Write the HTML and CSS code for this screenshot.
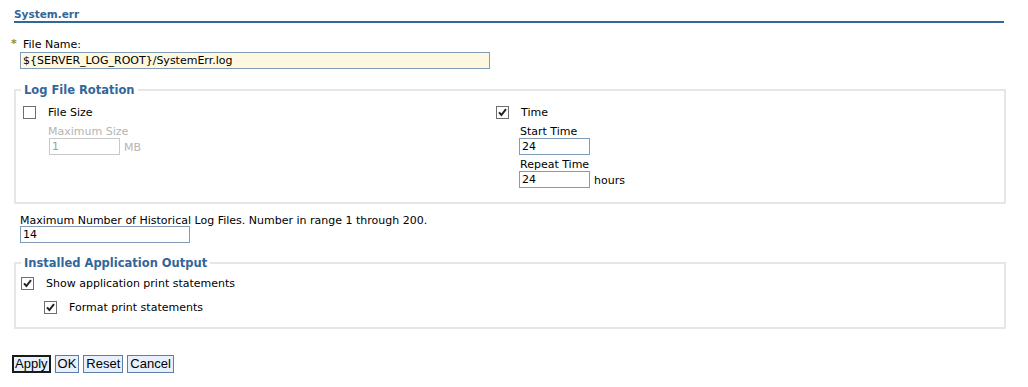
FILE: index.html
```html
<!DOCTYPE html>
<html lang="en">
<head>
    <meta charset="UTF-8">
    <title>System.err</title>
    <link rel="stylesheet" href="styles.css">
</head>
<body>
    <div class="page">
        <h2 class="section-title">System.err</h2>

        <div class="field name-field">
            <label class="field-label"><span class="required">*</span>File Name:</label>
            <input type="text" class="text-input wide required-input" value="${SERVER_LOG_ROOT}/SystemErr.log">
        </div>

        <fieldset class="group rotation">
            <legend>Log File Rotation</legend>
            <div class="rotation-cols">
                <div class="rotation-col">
                    <div class="check-row">
                        <span class="checkbox"></span>
                        <span class="check-label">File Size</span>
                    </div>
                    <div class="sub-field disabled">
                        <label class="field-label">Maximum Size</label>
                        <div class="input-row">
                            <input type="text" class="text-input short" value="1" disabled>
                            <span class="unit">MB</span>
                        </div>
                    </div>
                </div>
                <div class="rotation-col time-col">
                    <div class="check-row">
                        <span class="checkbox checked"><svg viewBox="0 0 11 11" width="11" height="11"><path d="M2 5.3 L4.4 8 L9 2.2" fill="none" stroke="#222" stroke-width="2"/></svg></span>
                        <span class="check-label">Time</span>
                    </div>
                    <div class="sub-field">
                        <label class="field-label">Start Time</label>
                        <input type="text" class="text-input short" value="24">
                    </div>
                    <div class="sub-field">
                        <label class="field-label">Repeat Time</label>
                        <div class="input-row">
                            <input type="text" class="text-input short" value="24">
                            <span class="unit">hours</span>
                        </div>
                    </div>
                </div>
            </div>
        </fieldset>

        <div class="field history-field">
            <label class="field-label">Maximum Number of Historical Log Files. Number in range 1 through 200.</label>
            <input type="text" class="text-input medium" value="14">
        </div>

        <fieldset class="group output">
            <legend>Installed Application Output</legend>
            <div class="check-row">
                <span class="checkbox checked"><svg viewBox="0 0 11 11" width="11" height="11"><path d="M2 5.3 L4.4 8 L9 2.2" fill="none" stroke="#222" stroke-width="2"/></svg></span>
                <span class="check-label">Show application print statements</span>
            </div>
            <div class="check-row nested">
                <span class="checkbox checked"><svg viewBox="0 0 11 11" width="11" height="11"><path d="M2 5.3 L4.4 8 L9 2.2" fill="none" stroke="#222" stroke-width="2"/></svg></span>
                <span class="check-label">Format print statements</span>
            </div>
        </fieldset>

        <div class="buttons">
            <button type="button" class="btn default">Apply</button>
            <button type="button" class="btn">OK</button>
            <button type="button" class="btn">Reset</button>
            <button type="button" class="btn">Cancel</button>
        </div>
    </div>
</body>
</html>
```

FILE: styles.css
```css
body {
    margin: 0;
    padding: 0;
    background-color: #fff;
    font-family: "DejaVu Sans", Verdana, sans-serif;
    font-size: 11px;
    color: #000;
}
.page {
    width: 992px;
    padding: 8px 0 0 14px;
}
.section-title {
    margin: 0;
    width: 990px;
    padding: 0;
    line-height: 13px;
    font-size: 10.5px;
    font-weight: bold;
    color: #336699;
    border-bottom: 2px solid #336699;
}
.field-label {
    display: block;
    line-height: 13px;
}
.name-field {
    margin-top: 15px;
    position: relative;
    padding-left: 6px;
}
.name-field .field-label {
    margin-left: 3px;
}
.required {
    position: absolute;
    left: -3px;
    top: -1px;
    color: #a08a00;
    font-weight: bold;
}
.text-input {
    display: block;
    box-sizing: border-box;
    height: 17px;
    margin: 0;
    padding: 1px 2px;
    border: 1px solid #7f9db9;
    font-family: "DejaVu Sans", Verdana, sans-serif;
    font-size: 11px;
    color: #000;
    background: #fff;
}
.name-field .text-input {
    margin-top: 1px;
}
.wide {
    width: 470px;
}
.required-input {
    background-color: #fff8e1;
}
.short {
    width: 71px;
}
.medium {
    width: 170px;
}
.group {
    margin: 14px 0 0 0;
    width: 992px;
    box-sizing: border-box;
    border: 2px solid #e6e6e6;
    padding: 0 8px 0 7px;
}
.group legend {
    padding: 0 3px;
    margin-left: -2px;
    font-size: 11.5px;
    font-weight: bold;
    color: #336699;
}
.rotation {
    height: 121px;
}
.rotation-cols {
    display: flex;
    padding-top: 4px;
}
.rotation-col {
    width: 473px;
}
.check-row {
    display: flex;
    align-items: center;
    height: 16px;
    margin-top: 3px;
}
.checkbox {
    display: flex;
    align-items: center;
    justify-content: center;
    box-sizing: border-box;
    width: 13px;
    height: 13px;
    border: 1px solid #6e6e6e;
    background: #fff;
    margin-right: 12px;
}
.sub-field {
    margin-left: 24px;
    margin-top: 5px;
}
.time-col .sub-field + .sub-field {
    margin-top: 3px;
}
.input-row {
    display: flex;
    align-items: center;
}
.unit {
    margin-left: 4px;
    margin-top: 1px;
}
.disabled {
    color: #b4b4b4;
}
.disabled .text-input {
    border-color: #c8c8c8;
    color: #a0a0a0;
    background: #fff;
    margin-left: 2px;
}
.time-col .text-input {
    margin-left: -1px;
}
.disabled .field-label {
    margin-left: 1px;
}
.history-field {
    margin-top: 10px;
    padding-left: 6px;
}
.history-field .text-input {
    margin-top: -1px;
}
.output {
    margin-top: 13px;
    height: 73px;
    padding-top: 3px;
    padding-left: 5px;
}
.output legend {
    margin-left: 0;
}
.output .check-row {
    margin-top: 2px;
}
.check-row.nested {
    margin-left: 23px;
    margin-top: 8px;
}
.buttons {
    display: flex;
    gap: 4px;
    margin-top: 26px;
    margin-left: -2px;
}
.btn {
    font-family: "Liberation Sans", Arial, sans-serif;
    font-size: 13px;
    height: 18px;
    line-height: 14px;
    padding: 0 2px;
    border: 1px solid #5a7ea8;
    background-color: #e8f0fc;
    color: #000;
    cursor: pointer;
}
.btn.default {
    border: 2px solid #1a1a1a;
    padding: 0 1px;
}
```
